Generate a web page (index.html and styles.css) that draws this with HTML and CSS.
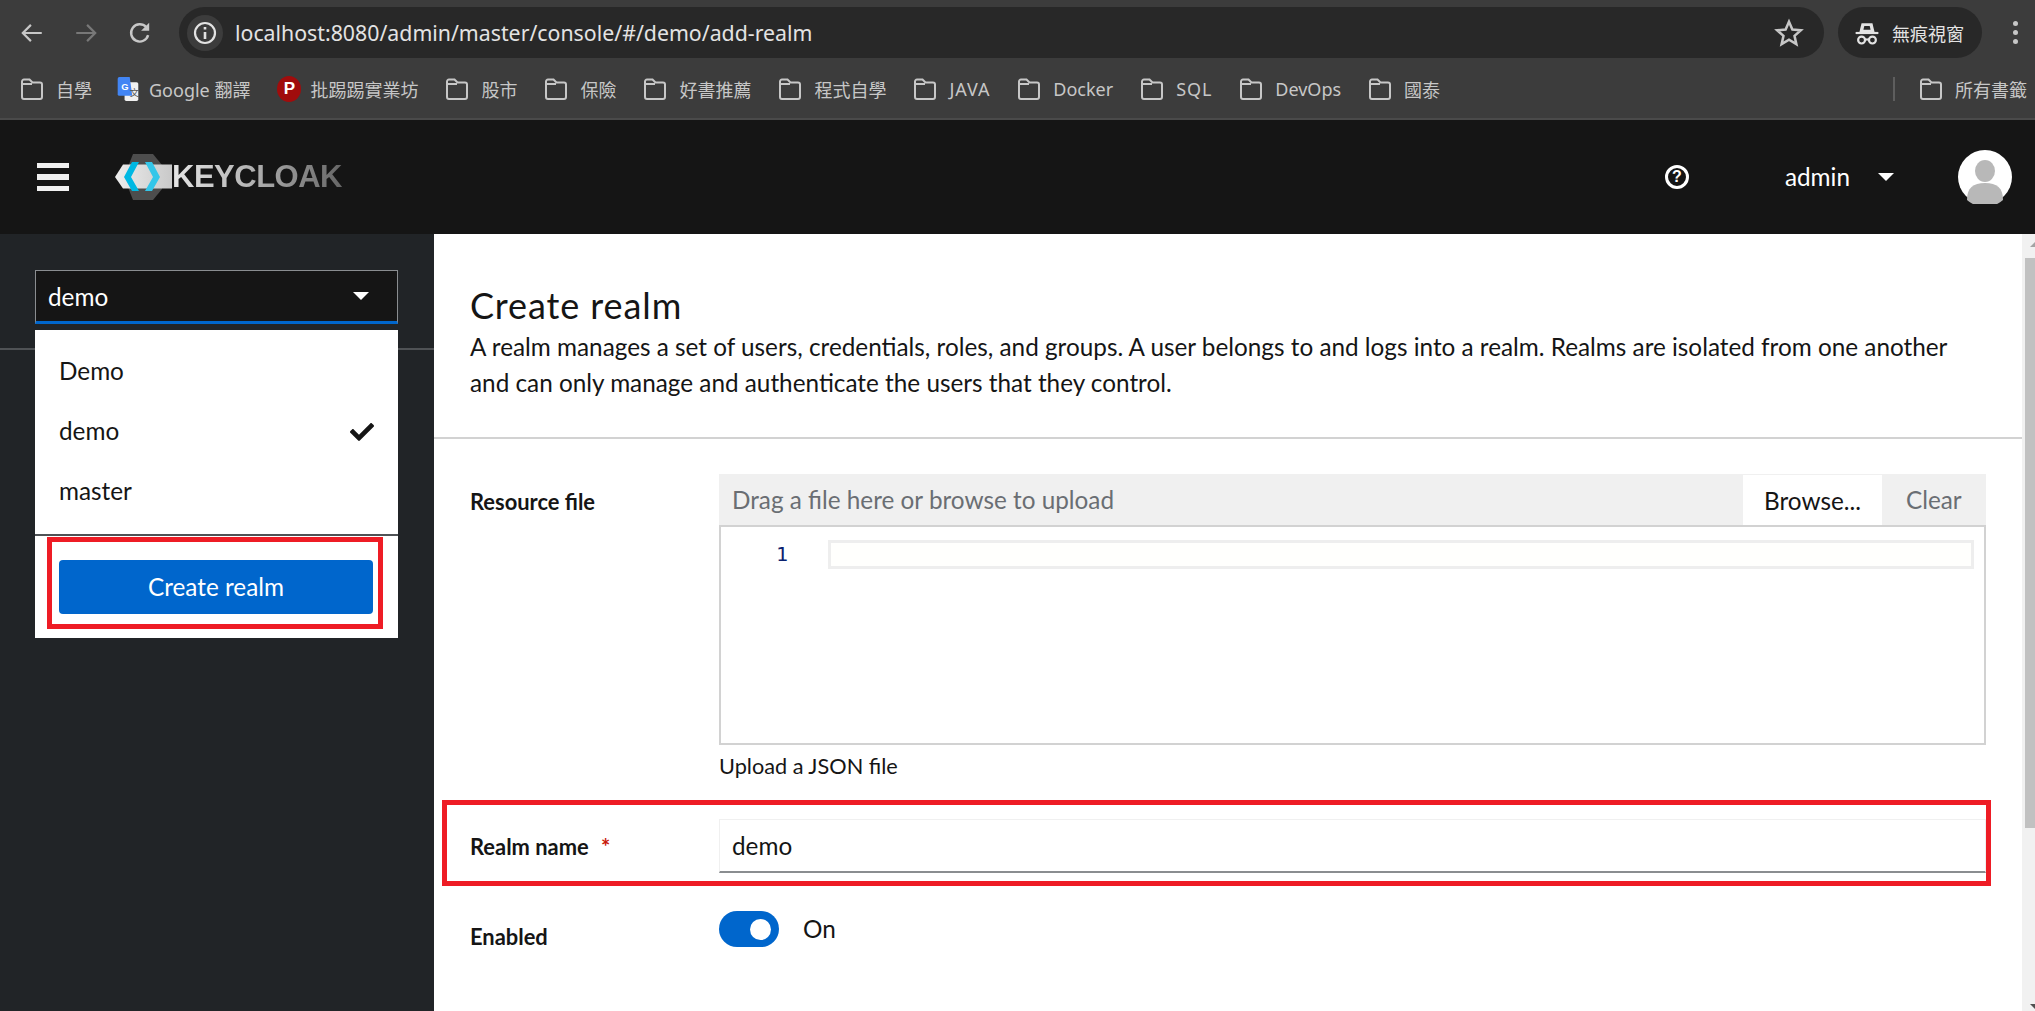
FILE: index.html
```html
<!DOCTYPE html>
<html lang="en">
  <head>
    <meta charset="UTF-8" />
    <title>Keycloak - Create realm</title>
    <link rel="stylesheet" href="styles.css">
  </head>
  <body>
    <svg class="defs">
      <symbol id="folder" viewBox="0 0 24 24">
        <path d="M2 4.500a2 2 0 0 1 2-2h5.500l3 3H20a2 2 0 0 1 2 2V20a2 2 0 0 1-2 2H4a2 2 0 0 1-2-2Z M2 7h10" fill="none" stroke="#c7c7c7" stroke-width="2" />
      </symbol>
    </svg>

    <div class="toolbar">
      <svg class="navIcon" viewBox="0 0 24 24"><path d="M21 12H4M11 4.500 3.500 12l7.500 7.500" fill="none" stroke="#c7c7c7" stroke-width="2" /></svg>
      <svg class="navIcon" viewBox="0 0 24 24"><path d="M3 12h17M13 4.500l7.500 7.500-7.500 7.500" fill="none" stroke="#787878" stroke-width="2" /></svg>
      <svg class="navIcon" viewBox="0 0 24 24"><path d="M19.500 14a8 8 0 1 1-1.800-7.500" fill="none" stroke="#c7c7c7" stroke-width="2.200" /><path d="M20.500 2.500v7.500h-7.500Z" fill="#c7c7c7" /></svg>
      <div class="omnibox">
        <span class="siteInfo">
          <svg viewBox="0 0 24 24" width="24" height="24"><circle cx="12" cy="12" r="10" fill="none" stroke="#e3e3e3" stroke-width="2.200" /><path d="M12 11v7M12 6v2.500" stroke="#e3e3e3" stroke-width="2.600" /></svg>
        </span>
        <span class="urlText">localhost:8080/admin/master/console/#/demo/add-realm</span>
        <svg class="star" viewBox="0 0 24 24" width="30" height="30"><path d="m12 3 2.700 6.200 6.800.6-5.100 4.500 1.500 6.600L12 17.400l-5.900 3.500 1.500-6.600-5.100-4.500 6.800-.6Z" fill="none" stroke="#c7c7c7" stroke-width="2" /></svg>
      </div>
      <div class="incognito">
        <svg viewBox="0 0 24 24" width="26" height="26"><path d="M7 3h10l2 8H5Z" fill="#e3e3e3" /><path d="M9.500 5.500h5l.8 3.500H8.700Z" fill="#282828" /><path d="M1.500 12h21" stroke="#e3e3e3" stroke-width="2" /><circle cx="7" cy="18.500" r="3.200" fill="none" stroke="#e3e3e3" stroke-width="2" /><circle cx="17" cy="18.500" r="3.200" fill="none" stroke="#e3e3e3" stroke-width="2" /><path d="M10 18h4" stroke="#e3e3e3" stroke-width="2" /></svg>
        <span>無痕視窗</span>
      </div>
      <div class="menuDots"><i></i><i></i><i></i></div>
    </div>

    <div class="bookmarks">
      <div class="mark"><svg class="markIcon"><use href="#folder" /></svg>自學</div>
      <div class="mark markFav googleMark">
        <svg class="markIcon" viewBox="0 0 24 28"><rect x="8" y="6" width="16" height="22" rx="2" fill="#f1f1f1" /><path d="M2 0h12l3 22H2a2 2 0 0 1-2-2V2a2 2 0 0 1 2-2Z" fill="#4285f4" /><text x="4" y="15" class="markG">G</text><text x="14" y="22" class="markWen">文</text></svg>
        Google 翻譯
      </div>
      <div class="mark markFav"><span class="pttBadge">P</span>批踢踢實業坊</div>
      <div class="mark"><svg class="markIcon"><use href="#folder" /></svg>股市</div>
      <div class="mark"><svg class="markIcon"><use href="#folder" /></svg>保險</div>
      <div class="mark"><svg class="markIcon"><use href="#folder" /></svg>好書推薦</div>
      <div class="mark"><svg class="markIcon"><use href="#folder" /></svg>程式自學</div>
      <div class="mark markWide"><svg class="markIcon"><use href="#folder" /></svg>JAVA</div>
      <div class="mark"><svg class="markIcon"><use href="#folder" /></svg>Docker</div>
      <div class="mark markWide"><svg class="markIcon"><use href="#folder" /></svg>SQL</div>
      <div class="mark"><svg class="markIcon"><use href="#folder" /></svg>DevOps</div>
      <div class="mark"><svg class="markIcon"><use href="#folder" /></svg>國泰</div>
      <div class="allMarks">
        <div class="mark"><svg class="markIcon"><use href="#folder" /></svg>所有書籤</div>
      </div>
    </div>

    <header class="masthead">
      <div class="burger"><i></i><i></i><i></i></div>
      <div class="logo">
        <svg viewBox="0 0 57 46" width="57" height="46">
          <defs>
            <linearGradient id="band" x1="0" x2="1" y1="0" y2="0">
              <stop offset="0" stop-color="#ededed" />
              <stop offset="1" stop-color="#c9c9c9" />
            </linearGradient>
          </defs>
          <path d="M18 0h20l9 11v24l-9 11H18L9 23Z" fill="#4d4d4d" />
          <path d="M0 23 8 10.500h49v24H8Z" fill="url(#band)" />
          <path d="M17 8h7l-8 15 8 14h-7L9 23Z" fill="#00b8e3" />
          <path d="M30 8h7l8 15-8 14h-7l8-14Z" fill="#33c6e9" />
        </svg>
        <span class="logoText">KEYCLOAK</span>
      </div>
      <div class="headRight">
        <span class="helpIcon">?</span>
        <span class="userName">admin</span>
        <span class="caret caretLight"></span>
        <svg class="avatar" viewBox="0 0 54 54">
          <circle cx="27" cy="27" r="27" fill="#fff" />
          <ellipse cx="27" cy="21" rx="10" ry="11" fill="#b8b8b8" />
          <path d="M9 50c0-12 6-17 18-17s18 5 18 17a27 27 0 0 1-36 0Z" fill="#b8b8b8" />
        </svg>
      </div>
    </header>

    <div class="page">
      <aside class="sidebar">
        <div class="realmArea">
          <div class="realmSelect">
            <span>demo</span>
            <span class="caret caretLight"></span>
          </div>
          <div class="realmMenu">
            <div class="realmList">
              <div class="realmItem">Demo</div>
              <div class="realmItem">demo
                <svg class="checkIcon" viewBox="0 0 512 512" width="24" height="24"><path fill="#151515" d="M173.900 439.400 7.500 273c-10-10-10-26.200 0-36.200l36.200-36.200c10-10 26.200-10 36.200 0L192 312.700 432.100 72.600c10-10 26.200-10 36.200 0l36.200 36.200c10 10 10 26.200 0 36.200L210.100 439.400c-10 10-26.200 10-36.200 0Z" /></svg>
              </div>
              <div class="realmItem">master</div>
            </div>
            <div class="realmFoot">
              <div class="markBox">
                <button class="createBtn">Create realm</button>
              </div>
            </div>
          </div>
        </div>
      </aside>

      <main class="content">
        <div class="scrollArea">
          <section class="pageHead">
            <h1>Create realm</h1>
            <p>A realm manages a set of users, credentials, roles, and groups. A user belongs to and logs into a realm. Realms are isolated from one another<br />and can only manage and authenticate the users that they control.</p>
          </section>

          <form class="realmForm">
            <div class="formRow">
              <label class="formLabel fileLabel">Resource file</label>
              <div>
                <div class="fileBar">
                  <span class="filePlaceholder">Drag a file here or browse to upload</span>
                  <span class="browseBtn">Browse...</span>
                  <span class="clearBtn">Clear</span>
                </div>
                <div class="editor">
                  <span class="lineNo">1</span>
                  <div class="currentLine"></div>
                </div>
                <div class="helper">Upload a JSON file</div>
              </div>
            </div>

            <div class="formRow nameRow">
              <label class="formLabel">Realm name <span class="required">*</span></label>
              <div class="textInput">demo</div>
            </div>

            <div class="formRow enabledRow">
              <label class="formLabel enabledLabel">Enabled</label>
              <div class="switchWrap">
                <span class="switch"></span>
                <span class="switchLabel">On</span>
              </div>
            </div>
          </form>
        </div>
        <div class="scrollbar">
          <span class="arrowUp"></span>
          <span class="thumb"></span>
          <span class="arrowDown"></span>
        </div>
      </main>
    </div>
  </body>
</html>
```

FILE: styles.css
```css
* {
  box-sizing: border-box;
}
html,
body {
  margin: 0;
  height: 100%;
  overflow: hidden;
}
body {
  display: flex;
  flex-direction: column;
  font-family: "Lato", "Noto Sans", sans-serif;
  color: #151515;
  background: #fff;
}
.defs {
  display: none;
}

/* browser bars */
.toolbar {
  height: 60px;
  padding: 7px 0 2px 5px;
  background: #3c3c3c;
  display: flex;
  align-items: center;
  flex: none;
}
.navIcon {
  width: 26px;
  height: 26px;
  margin: 0 14px;
}
.omnibox {
  margin-left: 12px;
  width: 1645px;
  height: 51px;
  border-radius: 26px;
  background: #282828;
  display: flex;
  align-items: center;
  padding-left: 8px;
  padding-right: 20px;
}
.siteInfo {
  width: 36px;
  height: 36px;
  border-radius: 50%;
  background: #3c3c3c;
  display: flex;
  align-items: center;
  justify-content: center;
}
.urlText {
  margin-left: 12px;
  font-family: "Noto Sans", sans-serif;
  font-size: 21.300px;
  color: #e3e3e3;
  flex: 1;
}
.incognito {
  margin-left: 14px;
  width: 144px;
  height: 51px;
  border-radius: 26px;
  background: #282828;
  display: flex;
  align-items: center;
  gap: 12px;
  padding-left: 16px;
  font-family: "Noto Sans CJK TC", sans-serif;
  font-size: 18px;
  color: #e3e3e3;
}
.menuDots {
  margin-left: 31px;
  display: flex;
  flex-direction: column;
  gap: 4px;
}
.menuDots i {
  width: 5px;
  height: 5px;
  border-radius: 50%;
  background: #c7c7c7;
}
.bookmarks {
  height: 60px;
  padding: 0 8px 0 20px;
  background: #3c3c3c;
  border-bottom: 2px solid #4a4a4a;
  display: flex;
  align-items: center;
  gap: 27px;
  flex: none;
  font-family: "Noto Sans", "Noto Sans CJK TC", sans-serif;
  font-size: 18px;
  color: #c7c7c7;
}
.mark {
  display: flex;
  align-items: center;
  gap: 12px;
  white-space: nowrap;
}
.markFav {
  gap: 9px;
}
.googleMark {
  margin-left: -3px;
}
.markWide {
  letter-spacing: 0.9px;
}
.markIcon {
  width: 24px;
  height: 24px;
}
.markG {
  font: bold 11px "Liberation Sans", sans-serif;
  fill: #fff;
}
.markWen {
  font: 11px "Noto Sans CJK TC", sans-serif;
  fill: #555;
}
.pttBadge {
  width: 24px;
  height: 26px;
  border-radius: 50%;
  background: #a00c0c;
  color: #fff;
  font: bold 17px "Liberation Sans", sans-serif;
  display: flex;
  align-items: center;
  justify-content: center;
}
.allMarks {
  margin-left: auto;
  height: 24px;
  padding-left: 24px;
  border-left: 2px solid #5e5e5e;
  display: flex;
  align-items: center;
}

/* keycloak header */
.masthead {
  height: 114px;
  flex: none;
  background: #151515;
  display: flex;
  align-items: center;
  padding-left: 37px;
  color: #fff;
}
.burger {
  width: 32px;
  display: flex;
  flex-direction: column;
  gap: 6px;
}
.burger i {
  height: 5.500px;
  background: #f0f0f0;
}
.logo {
  margin-left: 46px;
  display: flex;
  align-items: center;
}
.logoText {
  font: bold 31px "Liberation Sans", sans-serif;
  letter-spacing: -0.5px;
  background: linear-gradient(90deg, #e6e6e6, #b5b5b5 45%, #666);
  -webkit-background-clip: text;
  background-clip: text;
  color: transparent;
}
.headRight {
  margin-left: auto;
  padding-right: 23px;
  display: flex;
  align-items: center;
}
.helpIcon {
  width: 24px;
  height: 24px;
  border: 3px solid #fff;
  border-radius: 50%;
  font: bold 16px/18px "Liberation Sans", sans-serif;
  text-align: center;
}
.userName {
  margin-left: 96px;
  margin-bottom: 2px;
  font-size: 24.300px;
}
.caret {
  width: 0;
  height: 0;
  border-left: 8px solid transparent;
  border-right: 8px solid transparent;
  border-top: 8px solid #151515;
}
.caretLight {
  border-top-color: #fff;
}
.headRight .caret {
  margin-left: 28px;
}
.avatar {
  width: 54px;
  height: 54px;
  margin-left: 64px;
}

/* page */
.page {
  flex: 1;
  display: flex;
  min-height: 0;
}
.sidebar {
  width: 434px;
  flex: none;
  background: #212427;
}
.realmArea {
  position: relative;
  height: 116px;
  padding: 36px 36px 0 35px;
  border-bottom: 2px solid #4f5255;
}
.realmSelect {
  height: 54px;
  background: #151515;
  border: 1px solid #8a8d90;
  border-bottom: 3px solid #06c;
  color: #fff;
  font-size: 24.300px;
  display: flex;
  align-items: center;
  justify-content: space-between;
  padding: 0 28px 0 12px;
}
.realmMenu {
  position: absolute;
  top: 96px;
  left: 35px;
  width: 363px;
  height: 308px;
  background: #fff;
  color: #151515;
  font-size: 24.300px;
}
.realmList {
  height: 206px;
  padding-top: 10px;
  border-bottom: 2px solid #4f5255;
}
.realmItem {
  height: 60px;
  padding: 0 24px 0 24px;
  display: flex;
  align-items: center;
  justify-content: space-between;
}
.checkIcon {
  margin-top: 4px;
}
.realmFoot {
  padding: 1px 15px 0 12px;
}
.markBox {
  height: 92px;
  border: 5px solid #ee1c25;
  padding: 18px 5px 0 7px;
}
.createBtn {
  width: 100%;
  height: 54px;
  padding: 0 0 2px;
  border: none;
  border-radius: 4px;
  background: #06c;
  color: #fff;
  font: inherit;
}

.content {
  flex: 1;
  display: flex;
  min-width: 0;
}
.scrollArea {
  flex: 1;
  min-width: 0;
}
.pageHead {
  height: 205px;
  padding: 47px 36px 0;
  border-bottom: 2px solid #d2d2d2;
}
.pageHead h1 {
  margin: 0;
  font-size: 36px;
  font-weight: 400;
  letter-spacing: 0.9px;
  line-height: 48px;
}
.pageHead p {
  margin: 0;
  font-size: 24.300px;
  line-height: 36px;
}
.realmForm {
  padding: 35px 36px 0;
}
.formRow {
  display: grid;
  grid-template-columns: 249px 1fr;
}
.formLabel {
  font-size: 21.900px;
  font-weight: 700;
}
.fileLabel {
  line-height: 56px;
}
.fileBar {
  height: 53px;
  background: #f0f0f0;
  border-bottom: 2px solid #d2d2d2;
  display: flex;
  align-items: stretch;
  font-size: 24.300px;
  line-height: 52px;
}
.filePlaceholder {
  flex: 1;
  padding-left: 13px;
  color: #6a6e73;
}
.browseBtn {
  width: 139px;
  margin-top: 1px;
  background: #fff;
  text-align: center;
}
.clearBtn {
  width: 104px;
  padding-left: 24px;
  color: #6a6e73;
}
.editor {
  height: 218px;
  border: 2px solid #d2d2d2;
  border-top: none;
  padding: 13px 10px 0 0;
  display: flex;
  align-items: flex-start;
}
.lineNo {
  width: 107px;
  padding-right: 40px;
  margin-top: 2px;
  text-align: right;
  font: 20px "DejaVu Sans Mono", monospace;
  color: #0b216f;
}
.currentLine {
  flex: 1;
  height: 29px;
  background: #fffffd;
  border: 3px solid #eee;
}
.helper {
  margin-top: 8px;
  font-size: 21.700px;
  line-height: 26px;
}
.nameRow {
  margin: 21px -5px 0 -28px;
  height: 86px;
  padding: 14px 0 8px 23px;
  border: 5px solid #ee1c25;
  align-items: center;
}
.required {
  margin-left: 7px;
  color: #c9190b;
}
.textInput {
  height: 54px;
  padding-left: 12px;
  border: 1px solid #f0f0f0;
  border-bottom: 2px solid #8a8d90;
  font-size: 24.300px;
  line-height: 52px;
}
.enabledRow {
  margin-top: 25px;
}
.enabledLabel {
  line-height: 52px;
}
.switchWrap {
  display: flex;
  align-items: center;
  gap: 24px;
  height: 36px;
  font-size: 24.300px;
}
.switchLabel {
  margin-bottom: 2px;
}
.switch {
  position: relative;
  width: 60px;
  height: 36px;
  border-radius: 18px;
  background: #06c;
}
.switch::after {
  content: "";
  position: absolute;
  top: 7.500px;
  right: 8px;
  width: 21px;
  height: 21px;
  border-radius: 50%;
  background: #fff;
}

/* scrollbar drawn to match the screenshot */
.scrollbar {
  width: 13px;
  flex: none;
  background: #f1f1f1;
  display: flex;
  flex-direction: column;
  align-items: flex-end;
}
.arrowUp {
  margin: 8px 0 0;
  border-left: 5px solid transparent;
  border-bottom: 5px solid #a3a3a3;
  height: 0;
  width: 5px;
}
.thumb {
  width: 10px;
  height: 570px;
  margin-top: 11px;
  background: #c1c1c1;
}
.arrowDown {
  margin-top: auto;
  margin-bottom: 2px;
  border-left: 5px solid transparent;
  border-top: 5px solid #505050;
  height: 0;
  width: 5px;
}
```
